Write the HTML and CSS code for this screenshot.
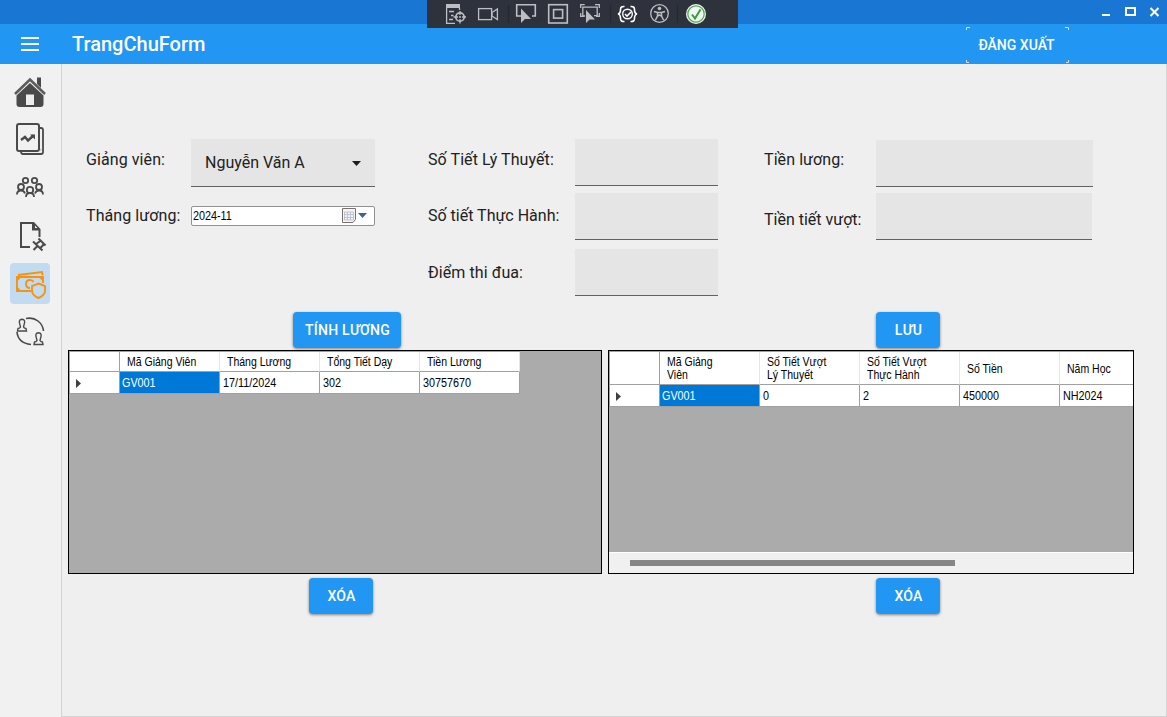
FILE: index.html
```html
<!DOCTYPE html>
<html lang="vi">
<head>
<meta charset="utf-8">
<title>TrangChuForm</title>
<link rel="stylesheet" href="styles.css">
</head>
<body>
<div class="window">
  <header class="titlebar">
    <svg class="caption-icons" width="60" height="24" viewBox="0 0 60 24" fill="none" stroke="#fff" stroke-width="2">
      <path d="M0 15h8"/>
      <rect x="24" y="8" width="9" height="7"/>
      <path d="M48.500 8l8 8M56.500 8l-8 8"/>
    </svg>
  </header>
  <div class="appbar">
    <svg class="menu-icon" width="18" height="14" viewBox="0 0 18 14" fill="#fff"><path d="M0 0h18v2H0zM0 6h18v2H0zM0 12h18v2H0z"/></svg>
    <h1 class="app-title">TrangChuForm</h1>
    <button class="logout"><svg class="corners" width="103" height="36" viewBox="0 0 103 36" fill="none" stroke="#d6dde4"><path d="M.5 3V.5H4M99 .5h3.500V3M.5 33v2.500H3M100 35.500h2.500V33"/></svg><span>ĐĂNG XUẤT</span></button>
  </div>
  <div class="debugbar">
    <svg width="311" height="28" viewBox="0 0 311 28" fill="none" stroke="#bdbec1" stroke-width="1.300">
      <path d="M19 4h14v4H19z" fill="#bdbec1" stroke="none"/>
      <path d="M19.600 8v15.300H28M22 11.500h5M24 15.500h2.500M22 19.500h4M32.500 8v2"/>
      <circle cx="33" cy="17" r="4.200" stroke-width="1.700"/><circle cx="33" cy="17" r="1" fill="#bdbec1" stroke="none"/>
      <path d="M33 11v4M33 19v4.500M26.500 17H31M35 17h4"/>
      <rect x="51.600" y="8.600" width="13" height="11"/><path d="M65 12.500l5.400-3.500v10.500L65 16z"/>
      <path d="M81.500 5v18M183.500 5v18M250.500 5v18" stroke="#25282f"/>
      <path d="M94 16h-4.300V4.700h18.600V16H105" stroke-width="1.600"/><path d="M94 8.500v14.500l4-4h6z" fill="#bdbec1" stroke="none"/>
      <rect x="121.700" y="4.700" width="18.600" height="18.300" stroke-width="1.600"/><rect x="126.600" y="9.600" width="9" height="8.500" stroke-width="1.600"/>
      <path d="M153.700 8V4.700h4M168 4.700h4.300V8M172.300 13v3.300H169M153.700 13v3.300h3"/><path d="M158 16h-2.200V7.200h14.400v8.500H167"/><path d="M159 10v13l3.500-3.500h5.500z" fill="#bdbec1" stroke="none"/>
      <g stroke="#fff" stroke-width="1.600"><circle cx="200.500" cy="14" r="4.800" stroke-width="1.400"/><path d="M198 14l2 2 4-4"/><path d="M197.500 6.500q-4-.5-4 3 0 4-2.500 4.500 2.500.5 2.500 4.500 0 3.500 4 3M203.500 6.500q4-.5 4 3 0 4 2.500 4.500-2.500.5-2.500 4.500 0 3.500-4 3"/></g>
      <circle cx="232.500" cy="13.500" r="8.800"/><circle cx="232.500" cy="8.500" r="1.800" fill="#bdbec1" stroke="none"/><path d="M227 11.500l3.500 1h4l3.500-1M230.500 12.500v3.500l-2 4M234.500 12.500v3.500l2 4M230.500 16l2-1 2 1" stroke-width="1.500"/>
      <circle cx="269" cy="14" r="10" fill="#f3f5f3" stroke="none"/><circle cx="269" cy="14" r="8.200" stroke="#4caf50" stroke-width="1.300"/><path d="M265 14.500l3 4 5.500-9" stroke="#2f9e3c" stroke-width="2"/>
    </svg>
  </div>
  <div class="body">
    <nav class="sidebar">
      <a class="nav-item"><svg width="40" height="40" viewBox="0 0 40 40"><path d="M27 5.500h4V16l-4-4z" fill="#4a4a4a"/><path d="M5 22L20 7.500 35 22" fill="none" stroke="#5c5c5c" stroke-width="2.600"/><path d="M6.500 23.500L20 11l13.500 12.500V32q0 3-3 3h-21q-3 0-3-3z" fill="#4a4a4a"/><path d="M16 22.500h8v10.500h-8z" fill="#eee"/></svg></a>
      <a class="nav-item"><svg width="40" height="40" viewBox="0 0 40 40" fill="none" stroke="#4a4a4a" stroke-width="2"><rect x="7" y="4" width="22" height="27" rx="2"/><path d="M29.500 8H31q2 0 2 2V32q0 2-2 2H13q-2 0-2-2.500" stroke-width="1.800"/><path d="M29 31.500l3-3" stroke="#a8a8a8" stroke-width="1"/><path d="M11 20l4-3 3 3.500 5.500-5" stroke-width="2.400"/><path d="M20 14.500h5v5z" fill="#4a4a4a" stroke="none"/></svg></a>
      <a class="nav-item"><svg width="40" height="40" viewBox="0 0 40 40" fill="none" stroke="#4a4a4a" stroke-width="1.800"><circle cx="15.500" cy="12.500" r="2.700"/><circle cx="24.500" cy="12.500" r="2.700"/><circle cx="11" cy="19" r="3"/><circle cx="29" cy="19" r="3"/><circle cx="20" cy="22" r="3.200"/><path d="M7 26.500q0-4 4-4 3 0 4 3M25 25.500q1-3 4-3 4 0 4 4M16 29q0-4 4-4t4 4"/></svg></a>
      <a class="nav-item"><svg width="40" height="40" viewBox="0 0 40 40" fill="none" stroke="#4a4a4a" stroke-width="2"><path d="M20 31h-9V7h12.500l6 6.500V21"/><path d="M22 6l8.500 8.500H22z" fill="#4a4a4a" stroke="none"/><path d="M25 9.500v2.500h2.500z" fill="#eee" stroke="none"/><path d="M28.500 22.500l7 7M23 25.500l9.500 9M31 24.500l-5 3.500M34 28l-4 4.500M27 30.500L23.500 34" stroke-width="2"/></svg></a>
      <a class="nav-item active"><svg width="40" height="40" viewBox="0 0 40 40" fill="none" stroke="#f7930f" stroke-width="1.900"><path d="M8 12l24-3 .7 3.200"/><path d="M21 28H7V14h26v6"/><path d="M7 14h4.500L7 18.500zM28.500 14H33v4.500zM7 23.500l4.500 4.500H7z" fill="#f7930f" stroke="none"/><path d="M23.500 19q-1-2-3.500-2-4 0-4 4t4 4"/><path d="M28.500 20.500l6.500 2.700v4.300q0 5-6.500 7.500-6.500-2.500-6.500-7.500v-4.300z"/></svg></a>
      <a class="nav-item"><svg width="40" height="40" viewBox="0 0 40 40" fill="none" stroke="#4a4a4a" stroke-width="1.400"><path d="M16 6.500q7-1.500 12 2.500t5.500 10M7 20q1 11 14 12.500" stroke-width="1.600"/><path d="M10 13q-2-5.500 2-5.700 4 .2 2 5.700l-.5 2q.5 1.200 2.500 1.500l.5 2.500h-9l.5-2.500q2-.3 2.500-1.500z"/><path d="M26.500 26.500q-2-5.500 2-5.700 4 .2 2 5.700l-.5 2q.5 1.200 2.500 1.500l.5 2.500h-9l.5-2.500q2-.3 2.500-1.500z"/></svg></a>
    </nav>
    <main class="content">
      <section class="form">
        <div class="group group-a">
          <label>Giảng viên:</label>
          <div class="select"><span>Nguyễn Văn A</span><svg width="9" height="5" viewBox="0 0 9 5"><path d="M0 0h9L4.500 5z" fill="#1d1d1d"/></svg></div>
          <label>Tháng lương:</label>
          <div class="date"><span class="narrow">2024-11</span>
            <svg width="26" height="16" viewBox="0 0 26 16" fill="none"><path d="M.5.500h13v11l-2.500 3H.5z" fill="#f5f5f8" stroke="#7d706c"/><path d="M2.500 4h9v8h-9zM5.500 4v8M8.500 4v8M2.500 6.500h9M2.500 9.500h9" stroke="#bcc3d4"/><path d="M16 5h9l-4.500 5z" fill="#44618b"/></svg></div>
        </div>
        <div class="group group-b">
          <label>Số Tiết Lý Thuyết:</label><div class="field"></div>
          <label>Số tiết Thực Hành:</label><div class="field"></div>
          <label>Điểm thi đua:</label><div class="field"></div>
        </div>
        <div class="group group-c">
          <label>Tiền lương:</label><div class="field"></div>
          <label class="low">Tiền tiết vượt:</label><div class="field short"></div>
        </div>
      </section>
      <section class="panels">
        <div class="panel panel-left">
          <button class="btn calc">TÍNH LƯƠNG</button>
          <div class="datagrid">
            <div class="row head"><div class="cell marker"></div><div class="cell"><span class="narrow">Mã Giảng Viên</span></div><div class="cell"><span class="narrow">Tháng Lương</span></div><div class="cell"><span class="narrow">Tổng Tiết Dạy</span></div><div class="cell"><span class="narrow">Tiền Lương</span></div></div>
            <div class="row"><div class="cell marker"><svg width="5" height="9" viewBox="0 0 5 9"><path d="M0 0l5 4.500L0 9z" fill="#404040"/></svg></div><div class="cell selected"><span class="narrow">GV001</span></div><div class="cell"><span class="narrow">17/11/2024</span></div><div class="cell"><span class="narrow">302</span></div><div class="cell"><span class="narrow">30757670</span></div></div>
          </div>
          <button class="btn delete">XÓA</button>
        </div>
        <div class="panel panel-right">
          <button class="btn">LƯU</button>
          <div class="datagrid">
            <div class="row head tall"><div class="cell marker"></div><div class="cell"><span class="narrow">Mã Giảng<br>Viên</span></div><div class="cell"><span class="narrow">Số Tiết Vượt<br>Lý Thuyết</span></div><div class="cell"><span class="narrow">Số Tiết Vượt<br>Thực Hành</span></div><div class="cell"><span class="narrow">Số Tiền</span></div><div class="cell"><span class="narrow">Năm Học</span></div></div>
            <div class="row"><div class="cell marker"><svg width="5" height="9" viewBox="0 0 5 9"><path d="M0 0l5 4.500L0 9z" fill="#404040"/></svg></div><div class="cell selected"><span class="narrow">GV001</span></div><div class="cell"><span class="narrow">0</span></div><div class="cell"><span class="narrow">2</span></div><div class="cell"><span class="narrow">450000</span></div><div class="cell"><span class="narrow">NH2024</span></div></div>
            <div class="scrollbar"><div class="thumb"></div></div>
          </div>
          <button class="btn">XÓA</button>
        </div>
      </section>
    </main>
  </div>
</div>
</body>
</html>
```
FILE: styles.css
```css
* { box-sizing: border-box; }
body { margin: 0; font-family: Roboto, "Liberation Sans", sans-serif; color: #212121; }
button { border: 0; padding: 0; margin: 0; font-family: inherit; }
svg { display: block; flex: none; }
.window { position: relative; width: 1167px; height: 717px; display: flex; flex-direction: column; overflow: hidden; background: #efefef; }
.titlebar { height: 24px; flex: none; background: #1976d2; display: flex; justify-content: flex-end; padding-right: 5px; }
.appbar { height: 40px; flex: none; background: #2196f3; display: flex; align-items: center; padding: 0 98px 0 21px; color: #fff; }
.app-title { margin: 0 0 0 33px; font-size: 20px; font-weight: 500; line-height: 40px; }
.logout { position: relative; margin-left: auto; width: 103px; height: 36px; background: none; color: #fff; font-size: 14px; font-weight: 500; padding: 2px 2px 0 0; }
.corners { position: absolute; left: 0; top: 1px; }
.debugbar { position: absolute; left: 427px; top: 0; width: 311px; height: 28px; background: #2e323c; }
.body { flex: 1; display: flex; min-height: 0; }
.sidebar { width: 62px; flex: none; background: #f1f1f1; border-right: 1px solid #d4d4d4; padding: 8px 0 0 10px; display: flex; flex-direction: column; gap: 8px; }
.nav-item { width: 40px; height: 40px; border-radius: 4px; }
.nav-item.active { background: #c1dbf2; height: 41px; margin: -1px 0 0; }
.content { flex: 1; border-right: 1px solid #d4d4d4; border-bottom: 1px solid #d4d4d4; }
.form { height: 248px; padding: 75px 0 0 24px; display: flex; align-items: flex-start; font-size: 16px; }
.group { display: grid; align-items: start; white-space: nowrap; }
.group label { line-height: 20px; padding-top: 11px; letter-spacing: .08px; }
.group-a { grid-template-columns: 105px 184px; grid-template-rows: 56px 40px; margin-right: 53px; }
.group-b { grid-template-columns: 147px 143px; grid-template-rows: 54px 56px 56px; margin-right: 46px; }
.group-b label:nth-of-type(2) { padding-top: 13px; letter-spacing: 0; }
.group-b label:nth-of-type(3) { padding-top: 14px; }
.group-c { grid-template-columns: 112px 217px; grid-template-rows: 53px 53px; padding-top: 1px; }
.group-c label { padding-top: 10px; }
.group-c label.low { padding-top: 17px; letter-spacing: 0; }
.field { height: 47px; background: #e5e5e5; border-bottom: 1px solid #626262; }
.field.short { width: 216px; }
.select { height: 48px; background: #e5e5e5; border-bottom: 1px solid #626262; display: flex; align-items: center; justify-content: space-between; padding: 0 14px; }
.select svg { margin-top: 2px; }
.date { height: 20px; margin-top: 11px; background: #fff; border: 1px solid #929292; border-radius: 2px; display: flex; align-items: center; justify-content: space-between; padding: 0 6px 0 1px; color: #000; }
.narrow { display: inline-block; font: 12px/13px "Liberation Sans", sans-serif; transform: scaleX(.9); transform-origin: left center; white-space: nowrap; }
.head .narrow { transform: scaleX(.875); }
.panels { display: flex; gap: 6px; padding-left: 6px; }
.panel { display: flex; flex-direction: column; align-items: flex-start; }
.btn { width: 64px; height: 36px; flex: none; border-radius: 4px; background: #2196f3; color: #fff; font-size: 14px; font-weight: 500; letter-spacing: .25px; padding-left: 1px; box-shadow: 0 1px 3px rgba(0,0,0,.45); }
.calc { width: 108px; margin-left: 225px; }
.delete { margin-left: 241px; }
.panel-right .btn { margin-left: 268px; }
.datagrid { position: relative; height: 224px; margin: 2px 0 4px; border: 1px solid #000; background: #ababab; overflow: hidden; display: flex; flex-direction: column; color: #000; }
.panel-left .datagrid { width: 534px; }
.panel-right .datagrid { width: 526px; }
.row { display: flex; flex: none; height: 22px; width: max-content; }
.row.head { height: 21px; border-top: 1px solid #a0a0a0; }
.row.head.tall { height: 34px; }
.cell { width: 100px; flex: none; background: #fff; border-right: 1px solid #a0a0a0; border-bottom: 1px solid #a0a0a0; display: flex; align-items: center; padding: 2px 0 0 3px; }
.head .cell { border-right-color: #e5e5e5; padding-left: 7px; }
.cell.marker { width: 51px; border-left: 1px solid #a0a0a0; border-right-color: #a0a0a0; padding-left: 6px; }
.cell.selected { background: #0078d7; color: #fff; padding-left: 2px; }
.scrollbar { margin-top: auto; height: 21px; flex: none; background: #f0f0f0; border-top: 1px solid #fff; padding: 7px 0 0 21px; }
.thumb { width: 325px; height: 6px; background: #868686; }
```
